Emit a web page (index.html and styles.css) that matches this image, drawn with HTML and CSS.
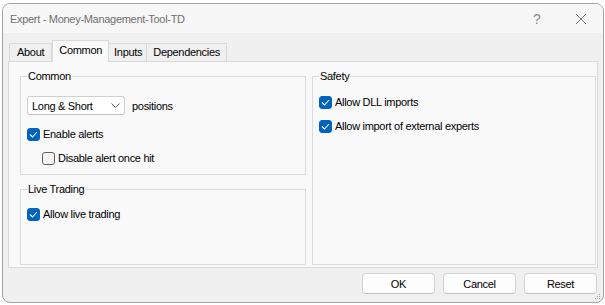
FILE: index.html
```html
<!DOCTYPE html>
<html lang="en">
<head>
  <meta charset="UTF-8" />
  <title>Expert - Money-Management-Tool-TD</title>
  <link rel="stylesheet" href="styles.css">
</head>
<body>
  <div class="window">
    <div class="titlebar">
      <span class="title">Expert - Money-Management-Tool-TD</span>
      <span class="help">?</span>
      <svg class="close" width="12" height="12" viewBox="0 0 12 12">
        <path d="M1 1 L11 11 M11 1 L1 11" stroke="#7a7a7a" stroke-width="1" fill="none" />
      </svg>
    </div>

    <div class="content">
      <div class="tabs">
        <span class="tab tab-about">About</span>
        <span class="tab active">Common</span>
        <span class="tab tab-inputs">Inputs</span>
        <span class="tab tab-deps">Dependencies</span>
      </div>

      <div class="panel">
        <div class="col">
          <fieldset class="group group-common">
            <legend>Common</legend>
            <div class="select-row">
              <div class="select">
                <span>Long &amp; Short</span>
                <svg width="9" height="5" viewBox="0 0 9 5">
                  <path d="M0.5 0.5 L4.5 4.5 L8.5 0.5" stroke="#5a5a5a" stroke-width="1" fill="none" />
                </svg>
              </div>
              <span class="select-label">positions</span>
            </div>
            <div class="check first">
              <span class="box on"><svg width="9" height="7" viewBox="0 0 9 7"><path d="M1 3.5 L3.5 6 L8 1" stroke="#fff" stroke-width="1.1" fill="none" /></svg></span>
              Enable alerts
            </div>
            <div class="check sub">
              <span class="box"></span>
              Disable alert once hit
            </div>
          </fieldset>

          <fieldset class="group group-live">
            <legend>Live Trading</legend>
            <div class="check first">
              <span class="box on"><svg width="9" height="7" viewBox="0 0 9 7"><path d="M1 3.5 L3.5 6 L8 1" stroke="#fff" stroke-width="1.1" fill="none" /></svg></span>
              Allow live trading
            </div>
          </fieldset>
        </div>

        <fieldset class="group group-safety">
          <legend>Safety</legend>
          <div class="check first">
            <span class="box on"><svg width="9" height="7" viewBox="0 0 9 7"><path d="M1 3.5 L3.5 6 L8 1" stroke="#fff" stroke-width="1.1" fill="none" /></svg></span>
            Allow DLL imports
          </div>
          <div class="check">
            <span class="box on"><svg width="9" height="7" viewBox="0 0 9 7"><path d="M1 3.5 L3.5 6 L8 1" stroke="#fff" stroke-width="1.1" fill="none" /></svg></span>
            Allow import of external experts
          </div>
        </fieldset>
      </div>

      <div class="buttons">
        <button>OK</button>
        <button>Cancel</button>
        <button>Reset</button>
      </div>
    </div>

    <svg class="grip" width="6" height="6" viewBox="0 0 6 6">
      <rect x="4" y="0" width="1" height="1" fill="#9a9a9a" />
      <rect x="2" y="2" width="1" height="1" fill="#9a9a9a" />
      <rect x="4" y="2" width="1" height="1" fill="#9a9a9a" />
      <rect x="0" y="4" width="1" height="1" fill="#9a9a9a" />
      <rect x="2" y="4" width="1" height="1" fill="#9a9a9a" />
      <rect x="4" y="4" width="1" height="1" fill="#9a9a9a" />
    </svg>
  </div>
</body>
</html>
```

FILE: styles.css
```css
body {
  margin: 0;
  padding: 0;
  background-color: #ffffff;
  font-family: "Liberation Sans", Arial, sans-serif;
  font-size: 11px;
  letter-spacing: -0.3px;
  color: #000;
}

.window {
  position: relative;
  box-sizing: border-box;
  width: 602px;
  height: 300px;
  margin: 3px 0 0 2px;
  border: 1px solid #a3a3a3;
  border-radius: 8px;
  background-color: #f0f0f0;
  overflow: hidden;
}

/* title bar */
.titlebar {
  display: flex;
  align-items: center;
  height: 29px;
  padding: 0 0 0 7px;
  background-color: #f7f7f7;
}
.title {
  flex: 1;
  font-size: 11px;
  color: #6f6f6f;
  padding-top: 1px;
}
.help {
  width: 12px;
  margin-right: 30px;
  color: #8a8a8a;
  font-size: 14px;
}
.close { margin-right: 16px; }

.content { padding: 0 5px; }

/* tabs */
.tabs {
  display: flex;
  align-items: flex-end;
  height: 21px;
  margin-top: 7px;
  padding-left: 1px;
}
.tab {
  box-sizing: border-box;
  height: 18px;
  line-height: 17px;
  padding: 0 5px;
  border: 1px solid #d9d9d9;
  border-bottom: none;
  background-color: #f0f0f0;
}
.tab-about { padding: 0 7px; }
.tab-inputs { border-left: none; border-right: none; padding: 0 4px 0 5px; }
.tab-deps { padding: 0 6px; }
.tab.active {
  position: relative;
  z-index: 1;
  height: 22px;
  line-height: 19px;
  margin-bottom: -1px;
  padding: 0 6px;
  background-color: #f9f9f9;
}

/* tab panel */
.panel {
  box-sizing: border-box;
  display: grid;
  grid-template-columns: 286px 284px;
  column-gap: 6px;
  height: 207px;
  padding: 7px 1px 2px 11px;
  border: 1px solid #dadada;
  background-color: #f9f9f9;
}
.col {
  display: flex;
  flex-direction: column;
}

.group {
  margin: 0;
  min-width: 0;
  padding: 0 6px 4px 6px;
  border: 1px solid #dcdcdc;
}
.group legend {
  padding: 0 1px;
  line-height: 15px;
}
.group-live {
  flex: 1;
  margin-top: 7px;
}
.group-live .check.first { margin-top: 5px; }
.group-safety .check.first { margin-top: 6px; }

/* dropdown */
.select-row {
  display: flex;
  align-items: center;
  margin-top: 12px;
}
.select {
  box-sizing: border-box;
  display: flex;
  align-items: center;
  justify-content: space-between;
  width: 98px;
  height: 19px;
  padding: 0 4px 0 4px;
  border: 1px solid #d0d0d0;
  border-bottom-color: #c2c2c2;
  border-radius: 3px;
  background-color: #fefefe;
}
.select-label { margin-left: 7px; }

/* checkboxes */
.check {
  display: flex;
  align-items: center;
  height: 24px;
  gap: 3px;
}
.group-common .check.first { margin-top: 7px; }
.check.sub { padding-left: 15px; }
.box {
  box-sizing: border-box;
  display: flex;
  align-items: center;
  justify-content: center;
  width: 13px;
  height: 13px;
  border: 1px solid #5f5f5f;
  border-radius: 3px;
  background-color: #f6f6f6;
}
.box.on {
  border-color: #0063bd;
  background-color: #0063bd;
}

/* dialog buttons */
.buttons {
  display: flex;
  justify-content: flex-end;
  gap: 8px;
  margin-top: 5px;
  padding-right: 1px;
}
.buttons button {
  box-sizing: border-box;
  width: 73px;
  height: 21px;
  padding: 0;
  border: 1px solid #d3d3d3;
  border-bottom-color: #c4c4c4;
  border-radius: 4px;
  background-color: #fdfdfd;
  font-family: "Liberation Sans", Arial, sans-serif;
  font-size: 11px;
  letter-spacing: -0.3px;
  color: #000;
}

.grip {
  position: absolute;
  right: 2px;
  bottom: 2px;
}
```
